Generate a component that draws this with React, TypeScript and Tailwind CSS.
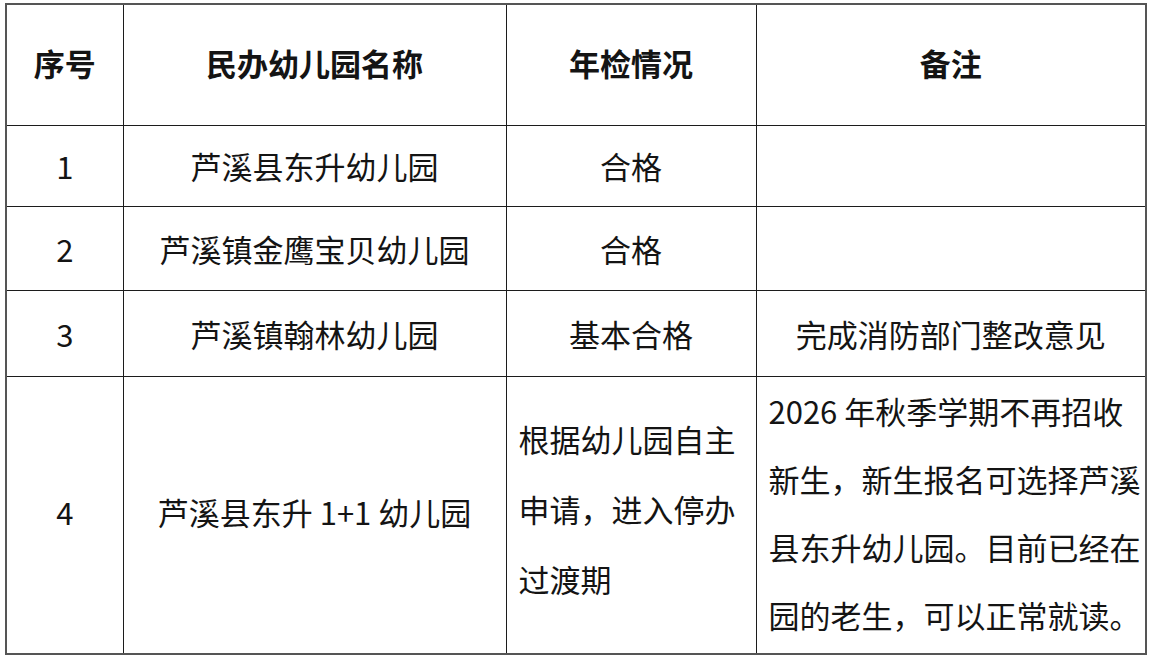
const rows = [
    { no: "1", name: "芦溪县东升幼儿园", status: "合格", note: "", h: "h-[81px]" },
    { no: "2", name: "芦溪镇金鹰宝贝幼儿园", status: "合格", note: "", h: "h-[84px]" },
    { no: "3", name: "芦溪镇翰林幼儿园", status: "基本合格", note: "完成消防部门整改意见", h: "h-[86px]" },
];

const cell = "border-[1.5px] border-[#1c1c1c] text-center align-middle p-0";

export default function App() {
    return (
        <div className="w-[1153px] h-[660px] bg-white pt-[3px] pl-[5px] text-[#141414] text-[31px] leading-none font-['Noto_Sans_CJK_SC','Noto_Sans',sans-serif]">
            <table className="table-fixed border-collapse w-[1140px] border-2 border-[#555]">
                <colgroup>
                    <col className="w-[117px]" />
                    <col className="w-[383px]" />
                    <col className="w-[250px]" />
                    <col className="w-[390px]" />
                </colgroup>
                <thead>
                    <tr className="h-[121px] font-bold">
                        <th className={cell + " pb-[4px]"}>序号</th>
                        <th className={cell + " pb-[4px]"}>民办幼儿园名称</th>
                        <th className={cell + " pb-[4px]"}>年检情况</th>
                        <th className={cell + " pb-[4px]"}>备注</th>
                    </tr>
                </thead>
                <tbody>
                    {rows.map((r) => (
                        <tr key={r.no} className={r.h}>
                            <td className={cell}>{r.no}</td>
                            <td className={cell}>{r.name}</td>
                            <td className={cell}>{r.status}</td>
                            <td className={cell}>{r.note}</td>
                        </tr>
                    ))}
                    <tr className="h-[277px]">
                        <td className={cell + " pb-[6px]"}>4</td>
                        <td className={cell + " pb-[6px]"}>芦溪县东升 1+1 幼儿园</td>
                        <td className={cell + " !text-left pl-[12px] pb-[12px] leading-[70px]"}>
                            <div>根据幼儿园自主</div>
                            <div>申请，进入停办</div>
                            <div>过渡期</div>
                        </td>
                        <td className={cell + " !text-left pl-[12px] pb-[4px] leading-[68px]"}>
                            <div>2026 年秋季学期不再招收</div>
                            <div>新生，新生报名可选择芦溪</div>
                            <div>县东升幼儿园。目前已经在</div>
                            <div>园的老生，可以正常就读。</div>
                        </td>
                    </tr>
                </tbody>
            </table>
        </div>
    );
}
